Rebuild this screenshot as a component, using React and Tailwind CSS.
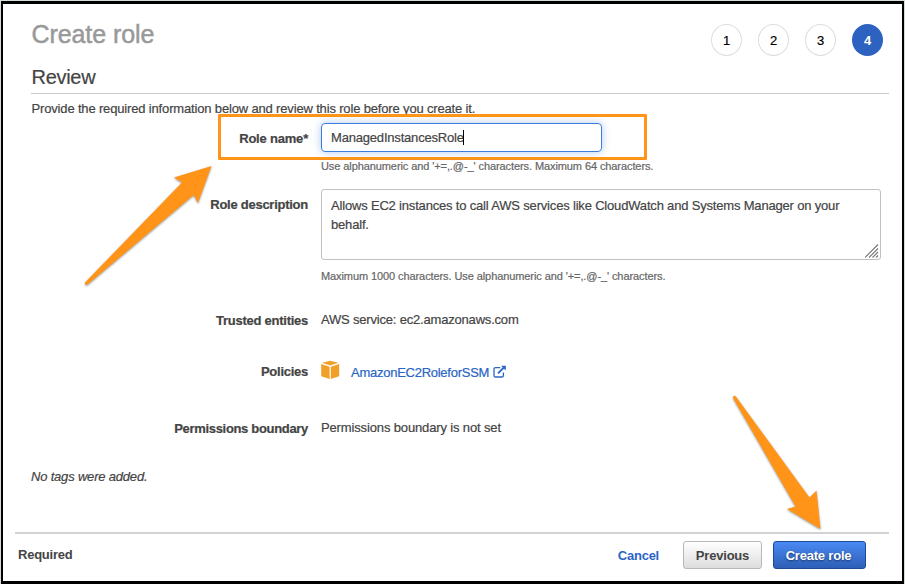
const steps = [1, 2, 3, 4];

function StepCircle({ number, active }) {
  return (
    <li
      className={
        active
          ? "flex h-8 w-[31px] items-center justify-center rounded-[50%] bg-[#2e62c0] text-[13px] font-bold text-white"
          : "flex h-8 w-[31px] items-center justify-center rounded-[50%] border border-[#dddddd] text-[13px] text-black [-webkit-text-stroke:0.2px_#000]"
      }
    >
      <span className="pt-px">{number}</span>
    </li>
  );
}

function Row({ label, className, labelClass, children }) {
  return (
    <div className={`flex items-start ${className}`}>
      <div className={`w-[277px] shrink-0 text-right font-bold leading-[18px] ${labelClass}`}>{label}</div>
      <div className="ml-[13px] leading-[18px] tracking-[-0.19px]">{children}</div>
    </div>
  );
}

function CubeIcon() {
  return (
    <svg width="19" height="20" viewBox="0 0 19 20" fill="#f0a029">
      <path d="M9.2 .8 17.4 2.8 9.2 5.4 1 2.8Z" />
      <path d="M.2 4 8.6 6.8V19L.2 16.2Z" />
      <path d="M18.2 4 9.8 6.8V19L18.2 16.2Z" />
    </svg>
  );
}

function ExternalIcon() {
  return (
    <svg width="14" height="14" viewBox="0 0 14 14" fill="none" stroke="#2a65c4">
      <path d="M7.3 2.6H2.6Q1 2.6 1 4.2V10.4Q1 12 2.6 12H8.8Q10.4 12 10.4 10.4V7.6" strokeWidth="1.3" />
      <path d="M5 8.4 11 2.4" strokeWidth="2" />
      <path d="M8 .8H12.8V5.6Z" fill="#2a65c4" stroke="none" />
    </svg>
  );
}

export default function App() {
  return (
    <div className="relative h-[584px] w-[905px] overflow-hidden bg-[#d5ddd7] p-px font-['Liberation_Sans',Arial,sans-serif] text-[13px] text-[#444444]">
      <div className="flex h-[583px] w-[903px] flex-col border-[3px] border-r-2 border-l-2 border-black bg-white">
        <header className="flex h-[53px] items-start justify-between pr-[19px] pl-7">
          <h1 className="mt-[15px] pl-[0.5px] text-[25px] leading-[30px] tracking-[-0.08px] text-[#999999] [-webkit-text-stroke:0.5px_#999999]">Create role</h1>
          <ol className="mt-5 flex gap-4">
            {steps.map((n) => (
              <StepCircle key={n} number={n} active={n === 4} />
            ))}
          </ol>
        </header>

        <main className="flex flex-col pr-[13px] pl-7 [-webkit-text-stroke:0.2px]">
          <h2 className="h-[37px] border-b border-[#cccccc] pt-2 pl-[0.5px] text-[20px] leading-6 tracking-[-0.3px]">Review</h2>
          <p className="h-[29px] pt-[6px] pl-[0.5px] leading-[18px] tracking-[-0.16px]">Provide the required information below and review this role before you create it.</p>

          <Row label="Role name*" className="h-[66px]" labelClass="pt-[7px] tracking-[-0.2px]">
            <div className="flex h-[29px] w-[281px] items-center rounded border border-[#3b7ddd] pl-[9px] shadow-[0_0_8px_rgba(59,125,221,0.4)]">
              <span>ManagedInstancesRole</span>
              <span className="-ml-px h-[15px] w-px bg-black" />
            </div>
            <p className="mt-[5px] text-[11px] tracking-[-0.09px] text-[#666666]">Use alphanumeric and '+=,.@-_' characters. Maximum 64 characters.</p>
          </Row>

          <Row label="Role description" className="h-[122px]" labelClass="pt-[7px] tracking-[-0.26px]">
            <div className="flex h-[71px] w-[560px] justify-between rounded-[3px] border border-[#c0c0c0] pt-[6px] pl-[9px]">
              <p className="w-[525px] leading-[19px] tracking-[-0.18px]">Allows EC2 instances to call AWS services like CloudWatch and Systems Manager on your behalf.</p>
              <svg className="mr-px mb-px self-end" width="14" height="14" viewBox="0 0 14 14" stroke="#777777" strokeWidth="1.1">
                <path d="M0 13.5 13 .5M4 13.5 13 4.5M7.5 13.5 13 8M11 13.5 13 11.5" />
              </svg>
            </div>
            <p className="mt-[7px] text-[11px] tracking-[-0.09px] text-[#666666]">Maximum 1000 characters. Use alphanumeric and '+=,.@-_' characters.</p>
          </Row>

          <Row label="Trusted entities" className="h-[49px]" labelClass="pt-px tracking-[-0.26px]">AWS service: ec2.amazonaws.com</Row>

          <Row label="Policies" className="h-[59px]" labelClass="pt-[3px] tracking-[-0.26px]">
            <div className="flex items-start">
              <CubeIcon />
              <a className="ml-[11px] pt-1 tracking-[-0.26px] text-[#2a65c4]">AmazonEC2RoleforSSM</a>
              <span className="ml-1 pt-[5px]">
                <ExternalIcon />
              </span>
            </div>
          </Row>

          <Row label="Permissions boundary" className="h-[49px]" labelClass="pt-px tracking-[-0.32px]">
            <span className="tracking-[-0.14px]">Permissions boundary is not set</span>
          </Row>

          <p className="h-16 leading-[18px] tracking-[-0.19px] italic">No tags were added.</p>
        </main>

        <footer className="mr-[13px] ml-3 flex h-11 items-center border-t-2 border-[#d2d2d2] pl-[3px] font-bold tracking-[-0.24px]">
          <span>Required</span>
          <div className="mr-[23px] ml-auto flex items-center">
            <a className="mr-6 pt-px text-[#2a65c4]">Cancel</a>
            <button className="mr-[11px] h-7 w-[79px] rounded-[3px] border border-[#b8b8b8] bg-gradient-to-b from-white to-[#dddddd] pt-px tracking-[-0.2px]">Previous</button>
            <button className="h-7 w-[93px] rounded-[3px] border border-[#1c4a99] bg-gradient-to-b from-[#4a8af4] to-[#2e5fb7] pt-px pr-0.5 tracking-[-0.2px] text-white [text-shadow:0_1px_2px_rgba(0,0,0,0.5)]">Create role</button>
          </div>
        </footer>
      </div>

      <div className="pointer-events-none absolute top-[114px] left-[218px] h-[46px] w-[429px] rounded-[1px] border-[3px] border-[#ff9419]" />
      <svg className="pointer-events-none absolute inset-0 drop-shadow-[0_1px_1px_rgba(0,0,0,0.4)]" width="905" height="584" viewBox="0 0 905 584" fill="#ff9419">
        <path d="M211.5 166 174 177.5 182 182.5 85 282.5Q84.5 285 87 285L193.7 195 198 203Z" />
        <path d="M820.5 529 816.5 490.5 809.5 497.5 735.5 396Q733 395 733 398L795.5 506.5 787 509Z" />
      </svg>
    </div>
  );
}
